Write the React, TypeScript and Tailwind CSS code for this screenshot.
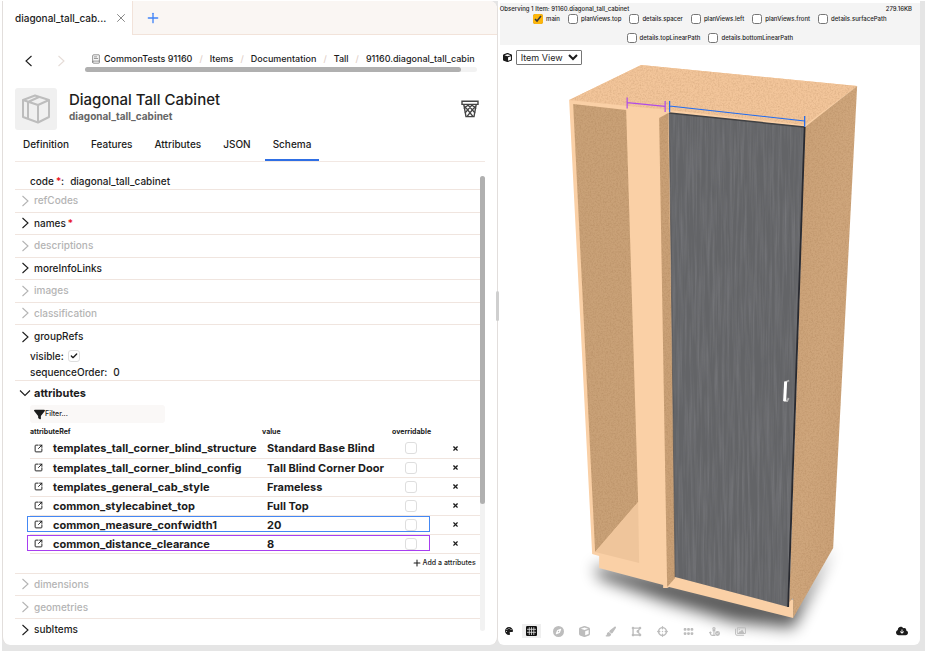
import { useState } from 'react'
import { BookText, Check, Plus, SquareArrowOutUpRight, X } from 'lucide-react'
import {
  FaAnchorCircleCheck,
  FaCloudArrowDown,
  FaCompass,
  FaCrosshairs,
  FaCube,
  FaDrawPolygon,
  FaFilter,
  FaGrip,
  FaPaintbrush,
  FaPalette,
  FaRegImages,
} from 'react-icons/fa6'

type Field = { name: string; empty?: boolean; required?: boolean }
type Attribute = { ref: string; value: string; mark?: 'blue' | 'purple' }

const crumbs = ['CommonTests 91160', 'Items', 'Documentation', 'Tall', '91160.diagonal_tall_cabin']

const tabs = ['Definition', 'Features', 'Attributes', 'JSON', 'Schema']

const topFields: Field[] = [
  { name: 'refCodes', empty: true },
  { name: 'names', required: true },
  { name: 'descriptions', empty: true },
  { name: 'moreInfoLinks' },
  { name: 'images', empty: true },
  { name: 'classification', empty: true },
]

const bottomFields: Field[] = [
  { name: 'dimensions', empty: true },
  { name: 'geometries', empty: true },
  { name: 'subItems' },
]

const attributes: Attribute[] = [
  { ref: 'templates_tall_corner_blind_structure', value: 'Standard Base Blind' },
  { ref: 'templates_tall_corner_blind_config', value: 'Tall Blind Corner Door' },
  { ref: 'templates_general_cab_style', value: 'Frameless' },
  { ref: 'common_stylecabinet_top', value: 'Full Top' },
  { ref: 'common_measure_confwidth1', value: '20', mark: 'blue' },
  { ref: 'common_distance_clearance', value: '8', mark: 'purple' },
]

const layers = [
  'main',
  'planViews.top',
  'details.spacer',
  'planViews.left',
  'planViews.front',
  'details.surfacePath',
  'details.topLinearPath',
  'details.bottomLinearPath',
]

const tools = [
  { label: 'Compass', icon: FaCompass },
  { label: 'Box', icon: FaCube },
  { label: 'Brush', icon: FaPaintbrush },
  { label: 'Shape', icon: FaDrawPolygon },
  { label: 'Target', icon: FaCrosshairs },
  { label: 'Snap grid', icon: FaGrip },
  { label: 'Anchors', icon: FaAnchorCircleCheck },
  { label: 'Images', icon: FaRegImages },
]

const chevronPaths = {
  left: 'M8.5 1 L3 6 L8.5 11',
  right: 'M3.5 1 L9 6 L3.5 11',
  down: 'M1 3.5 L6 8.5 L11 3.5',
}

function Chevron({ to }: { to: keyof typeof chevronPaths }) {
  return (
    <svg viewBox="0 0 12 12" className="size-3 shrink-0" fill="none" stroke="currentColor" strokeWidth="1.1">
      <path d={chevronPaths[to]} />
    </svg>
  )
}

function BoxIcon() {
  return (
    <svg viewBox="0 0 30 30" className="size-[30px]" fill="none" stroke="#bdbdbd" strokeWidth="2" strokeLinejoin="round">
      <path d="M2 6 L14 1.5 L28 6 V23 L17 28.5 L2 23 Z" />
      <path d="M2 6 L17 11 L28 6 M17 11 V28 M7 8 V24.5 M7 8 L18 3" />
    </svg>
  )
}

function TrashIcon() {
  return (
    <svg viewBox="0 0 18 18" className="size-[18px]" fill="none" stroke="#444" strokeWidth="1.4">
      <path d="M1 1.2 H17 V4.4 H1 Z" />
      <path d="M2.8 4.6 L5 16.6 H13 L15.2 4.6" />
      <path d="M3.5 6 L12 16.5 M7 5 L14 13 M11 5 L15 9 M14.5 6 L6 16.5 M11 5 L4 13 M7 5 L3 9" strokeWidth="1.2" />
    </svg>
  )
}

function GridIcon() {
  return (
    <svg viewBox="0 0 11 10" className="h-2.5 w-[11px]">
      <rect width="11" height="10" rx="1.2" fill="#111" />
      <path d="M1 3.3 H10 M1 6.3 H10 M3.3 1.2 V9 M5.5 1.2 V9 M7.8 1.2 V9" stroke="#e5e5e5" strokeWidth="0.8" />
    </svg>
  )
}

function FieldRow({ field }: { field: Field }) {
  return (
    <button
      className={`flex w-full flex-1 items-center gap-[3px] border-b border-[#f0e5df] pl-1 ${
        field.empty ? 'text-[#b4b4b4]' : 'text-[#1c1c1c]'
      }`}
    >
      <Chevron to="right" />
      <span>
        {field.name}
        {field.required && <span className="ml-0.5 text-red-600">*</span>}
      </span>
    </button>
  )
}

function AttributesTable() {
  return (
    <table className="w-full table-fixed border-collapse text-left">
      <thead>
        <tr className="h-4 text-[7px] font-bold leading-none">
          <th className="w-[232px]">attributeRef</th>
          <th className="w-[130px]">value</th>
          <th className="w-[40px]">overridable</th>
          <th aria-label="Remove" />
        </tr>
      </thead>
      <tbody>
        {attributes.map((attr) => (
          <tr key={attr.ref} className="relative h-[19px] border-b border-[#f0e5df] text-[11px] font-bold leading-4">
            <td className="p-0">
              <div className="flex items-center gap-2.5 pl-1">
                <button aria-label={`Open ${attr.ref}`}>
                  <SquareArrowOutUpRight className="size-[9px]" strokeWidth={2.5} />
                </button>
                {attr.ref}
              </div>
              {attr.mark && (
                <span
                  className={`pointer-events-none absolute inset-y-px -left-[3px] right-[50px] border ${
                    attr.mark === 'blue' ? 'border-[#4488f4]' : 'border-[#a83ef0]'
                  }`}
                />
              )}
            </td>
            <td className="p-0 pl-[5px]">{attr.value}</td>
            <td className="p-0">
              <input
                type="checkbox"
                aria-label={`${attr.ref} overridable`}
                className="ml-[13px] block size-3 appearance-none rounded-[3px] border border-[#dedede] bg-white"
              />
            </td>
            <td className="p-0">
              <button aria-label={`Remove ${attr.ref}`} className="mx-auto block">
                <X className="size-[7px]" strokeWidth={4} />
              </button>
            </td>
          </tr>
        ))}
      </tbody>
    </table>
  )
}

function SchemaForm() {
  return (
    <div className="flex min-h-0 flex-1 pl-3 pr-3">
      <div className="min-w-0 flex-1 overflow-hidden pt-3 text-[10px] font-medium">
        <div className="flex h-4 items-center border-b border-[#f0e5df] pl-[15px]">
          <span>
            code<span className="ml-0.5 text-red-600">*</span>:
          </span>
          <span className="ml-1.5">diagonal_tall_cabinet</span>
        </div>
        <div className="flex h-[135px] flex-col">
          {topFields.map((field) => (
            <FieldRow key={field.name} field={field} />
          ))}
        </div>
        <button className="flex h-[23px] w-full items-center gap-[3px] pl-1">
          <Chevron to="right" />
          groupRefs
        </button>
        <label className="flex h-4 items-center gap-1 pl-[15px]">
          visible:
          <span className="grid place-items-center">
            <input
              type="checkbox"
              defaultChecked
              className="size-3 appearance-none rounded-[3px] border border-[#dedede] [grid-area:1/1]"
            />
            <Check className="pointer-events-none size-2 [grid-area:1/1]" strokeWidth={4} />
          </span>
        </label>
        <div className="flex h-[17px] items-center gap-1.5 border-b border-[#f0e5df] pl-[15px]">
          <span>sequenceOrder:</span>
          <span>0</span>
        </div>
        <button className="flex h-6 w-full items-center gap-[3px] pl-1 text-[11px] font-bold">
          <Chevron to="down" />
          attributes
        </button>
        <div className="pl-[15px]">
          <label className="flex h-[18px] w-[135px] items-center rounded-[3px] bg-[#faf8f7] pl-1">
            <FaFilter className="size-[11px] shrink-0" />
            <input aria-label="Filter" placeholder="Filter..." className="w-full bg-transparent text-[7px] placeholder:text-[#222]" />
          </label>
          <AttributesTable />
          <div className="flex h-[19px] items-center justify-end pr-1">
            <button className="flex items-center gap-px text-[7px] tracking-normal">
              <Plus className="size-2.5" strokeWidth={2.5} />
              Add a attributes
            </button>
          </div>
        </div>
        <div className="flex h-[68px] flex-col border-t border-[#f0e5df] [&>button:last-child]:border-b-0">
          {bottomFields.map((field) => (
            <FieldRow key={field.name} field={field} />
          ))}
        </div>
      </div>
      <div className="mb-3.5 mt-3.5 w-[5px] rounded-full bg-[#f2f2f2]">
        <div className="h-[72%] rounded-full bg-[#b0b0b0]" />
      </div>
    </div>
  )
}

function ItemPanel() {
  const [activeTab, setActiveTab] = useState('Schema')

  return (
    <section className="flex w-[54%] flex-col overflow-hidden rounded-b-lg rounded-tr-lg border-x border-[#e2dedc] bg-white">
      <div className="flex h-[34px] shrink-0 bg-[#faf6f3]">
        <div className="flex w-[130px] items-center justify-between border-r border-[#f2e3da] bg-white pl-3 pr-1 text-[10px] font-medium">
          diagonal_tall_cab...
          <button aria-label="Close tab">
            <X className="size-3.5 text-[#777]" strokeWidth={1.5} />
          </button>
        </div>
        <div className="flex flex-1 items-center border-b border-[#f2e3da] pl-3">
          <button aria-label="New tab">
            <Plus className="size-4 text-[#3f83f8]" strokeWidth={2} />
          </button>
        </div>
      </div>

      <div className="flex shrink-0 items-start pl-5 pr-5 pt-[18px]">
        <button aria-label="Back" className="pt-0.5">
          <Chevron to="left" />
        </button>
        <button aria-label="Forward" className="ml-5 pt-0.5 text-[#e5dcd7]">
          <Chevron to="right" />
        </button>
        <div className="ml-[18px] min-w-0 flex-1">
          <nav className="flex h-3.5 items-center overflow-hidden whitespace-nowrap pb-0.5 pl-1.5 text-[9px] font-medium">
            <BookText className="mr-[3px] size-2.5 shrink-0 text-[#666]" strokeWidth={1.75} />
            {crumbs.map((crumb, i) => (
              <span key={crumb}>
                {i > 0 && <span className="mx-[7px] text-[#dfcfc7]">/</span>}
                <a href="#">{crumb}</a>
              </span>
            ))}
          </nav>
          <div className="h-[5px] rounded-full bg-[#f2f2f2]">
            <div className="h-full w-[96%] rounded-full bg-[#b0b0b0]" />
          </div>
        </div>
      </div>

      <header className="mt-4 flex shrink-0 items-center pl-3 pr-[18px]">
        <div className="grid size-[42px] place-items-center rounded-[3px] bg-[#f0f0f0]">
          <BoxIcon />
        </div>
        <div className="ml-3 flex-1 pb-1">
          <h1 className="text-[15px] font-medium leading-[18px]">Diagonal Tall Cabinet</h1>
          <p className="text-[10px] font-bold leading-[14px] text-[#666]">diagonal_tall_cabinet</p>
        </div>
        <button aria-label="Delete item">
          <TrashIcon />
        </button>
      </header>

      <div className="mx-3 flex h-8 shrink-0 gap-1.5 border-b border-[#f2e8e3]">
        {tabs.map((tab) => (
          <button
            key={tab}
            onClick={() => setActiveTab(tab)}
            className={`border-b-2 px-2 text-[10px] font-medium ${
              activeTab === tab ? 'border-[#2f6fe4]' : 'border-transparent'
            }`}
          >
            {tab}
          </button>
        ))}
      </div>

      <SchemaForm />
    </section>
  )
}

function CabinetDrawing() {
  return (
    <svg viewBox="498 45 422 600" className="absolute inset-0 h-full w-full" role="img" aria-label="Tall cabinet">
      <defs>
        <filter id="blur" x="-20%" y="-50%" width="140%" height="200%">
          <feGaussianBlur stdDeviation="8" />
        </filter>
        <filter id="speckle" x="0" y="0" width="100%" height="100%" colorInterpolationFilters="sRGB">
          <feTurbulence type="fractalNoise" baseFrequency="0.6" numOctaves="3" seed="4" />
          <feColorMatrix values="0 0 0 0 0.45  0 0 0 0 0.28  0 0 0 0 0.12  0.3 0 0 0 -0.12" />
          <feComposite in2="SourceGraphic" operator="in" result="noise" />
          <feMerge>
            <feMergeNode in="SourceGraphic" />
            <feMergeNode in="noise" />
          </feMerge>
        </filter>
        <filter id="grain" x="0" y="0" width="100%" height="100%" colorInterpolationFilters="sRGB">
          <feTurbulence type="fractalNoise" baseFrequency="0.4 0.015" numOctaves="3" seed="7" />
          <feColorMatrix values="0 0 0 0 0.6  0 0 0 0 0.6  0 0 0 0 0.62  0.6 0 0 0 -0.22" />
          <feComposite in2="SourceGraphic" operator="in" result="noise" />
          <feMerge>
            <feMergeNode in="SourceGraphic" />
            <feMergeNode in="noise" />
          </feMerge>
        </filter>
        <linearGradient id="side" x1="0" y1="0" x2="1" y2="1">
          <stop offset="0" stopColor="#c9a076" />
          <stop offset="0.5" stopColor="#cfa67c" />
          <stop offset="1" stopColor="#c79d73" />
        </linearGradient>
      </defs>

      {/* floor shadow */}
      <path d="M594 566 L668 578 L792 604 L832 546 L818 576 L793 628 L735 622 L664 601 L600 578 Z" fill="#000" opacity="0.65" filter="url(#blur)" />

      {/* carcass, lit faces */}
      <path d="M569 100 L641 65 L857 86 L805 128 L669 113 L676 577 L793 600 L793 618 L669 587 L667 588 L663 588 L663 585 L599 568 L599 556 L592 554 Z" fill="#fad0a6" />
      <path d="M569 100 L641 65 L857 86 L805 125 L668 110 Z" fill="#f2c59a" filter="url(#speckle)" />

      {/* inside wall and floor */}
      <path d="M573 104 L626 110 L638 502 L595 552 Z" fill="#c9a177" filter="url(#speckle)" />
      <path d="M638 502 L639 563 L595 552 Z" fill="#efc59b" />

      {/* front edge of the filler */}
      <path d="M659 118 L668 113 L675 578 L667 587 Z" fill="#c9a076" filter="url(#speckle)" />

      {/* outer side */}
      <path d="M805 127 L857 86 L833 548 L793 618 L793 598 L789 602 Z" fill="url(#side)" filter="url(#speckle)" />

      {/* door */}
      <path d="M669 113 L805 127 L788 607 L675 577 Z" fill="#636467" filter="url(#grain)" />
      <path d="M669 113 L804 127" stroke="#404144" strokeWidth="1.5" />
      <path d="M804.5 127 L788 607" stroke="#292a30" strokeWidth="1.8" />
      <path d="M669 113 L675 577" stroke="#4b4b4d" strokeWidth="0.7" />
      <path d="M789 380.5 L785.5 382 L784.5 401 L787 401 L788.5 398" fill="none" stroke="#b5b5b5" strokeWidth="1.8" />
      <path d="M785.5 381.5 L784.5 401" stroke="#fff" strokeWidth="3" />

      {/* measures */}
      <path d="M627 97.5 V108.5 M627 102.7 L665 106.3 M665 101 V112" stroke="#b04be8" strokeWidth="1.2" />
      <path d="M669.5 101 V112 M669.5 106 L804.5 121 M804.5 116 V127" stroke="#1f6bf1" strokeWidth="1.2" />
    </svg>
  )
}

function PreviewPanel() {
  const [selected, setSelected] = useState(['main'])

  const toggle = (name: string) => {
    setSelected((prev) => (prev.includes(name) ? prev.filter((n) => n !== name) : [...prev, name]))
  }

  return (
    <section className="flex min-w-0 flex-1 flex-col overflow-hidden rounded-b-md bg-white">
      <div className="ml-0.5 mt-0.5 h-[42px] bg-[#f4f4f4] text-[6px] font-medium">
        <div className="flex h-2.5 items-center justify-between pr-2">
          <span>Observing 1 Item: 91160.diagonal_tall_cabinet</span>
          <span>279.16KB</span>
        </div>
        <div className="flex flex-wrap justify-center gap-x-2 px-6">
          {layers.map((layer) => (
            <label key={layer} className="flex h-[19px] items-start gap-[3px] leading-3">
              <input
                type="checkbox"
                checked={selected.includes(layer)}
                onChange={() => toggle(layer)}
                className="mt-px size-2.5 accent-[#fdb60b]"
              />
              {layer}
            </label>
          ))}
        </div>
      </div>

      <div className="relative flex min-h-0 flex-1 flex-col justify-between">
        <CabinetDrawing />
        <label className="relative mt-[5px] flex items-center gap-1 pl-[5px]">
          <FaCube className="size-[9px]" />
          <select aria-label="View" className="h-[15px] w-[66px] rounded-[1px] border border-[#767676] bg-white text-[9px]">
            <option>Item View</option>
          </select>
        </label>
        <div className="relative flex h-7 items-center pl-[7px] pr-3">
          <button aria-label="Palette">
            <FaPalette className="size-2" />
          </button>
          <button aria-label="Grid" className="ml-[9px] grid h-3.5 w-[19px] place-items-center bg-[#efefef]">
            <GridIcon />
          </button>
          <div className="ml-3 flex gap-[15px] text-[#bdbdbd]">
            {tools.map(({ label, icon: Icon }) => (
              <button key={label} aria-label={label}>
                <Icon className="size-[11px]" />
              </button>
            ))}
          </div>
          <button aria-label="Download" className="ml-auto">
            <FaCloudArrowDown className="size-3" />
          </button>
        </div>
      </div>
    </section>
  )
}

function App() {
  return (
    <div className="flex h-screen bg-white pb-0.5 pl-0.5 pt-px font-['Inter',sans-serif] text-[#1c1c1c]">
      <main className="relative flex min-w-0 flex-1 bg-[#e5e5e5] pb-1.5 pr-[5px]">
        <ItemPanel />
        <PreviewPanel />
        <div className="absolute left-[54%] top-[290px] -ml-1 h-[30px] w-[3px] rounded-full bg-[#cfcfcf]" />
      </main>
    </div>
  )
}

export default App
